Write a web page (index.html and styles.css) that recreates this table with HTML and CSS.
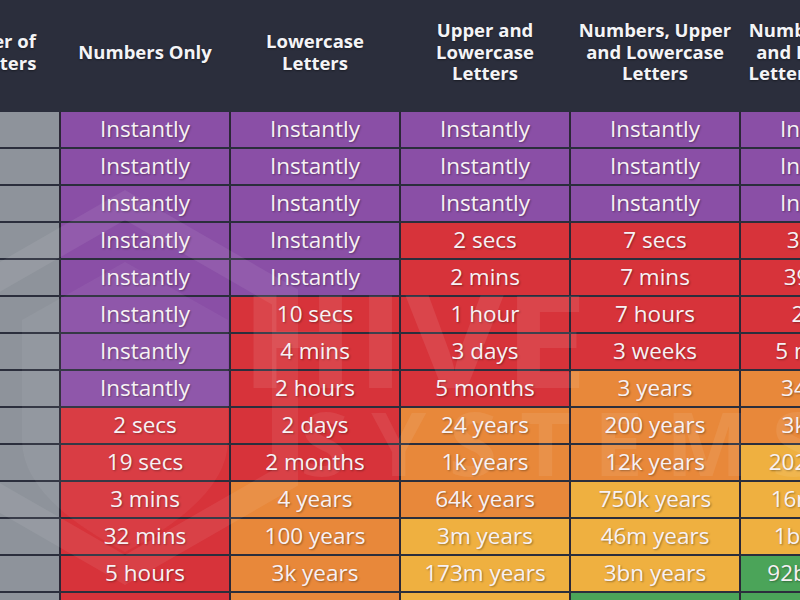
FILE: index.html
```html
<!DOCTYPE html>
<html lang="en">
<head>
<meta charset="utf-8">
<title>Password cracking times</title>
<link rel="stylesheet" href="styles.css">
</head>
<body>
<div class="page">
  <div class="table">
    <div class="row head">
      <div class="hc first">Number of<br>Characters</div>
      <div class="hc">Numbers Only</div>
      <div class="hc">Lowercase<br>Letters</div>
      <div class="hc">Upper and<br>Lowercase<br>Letters</div>
      <div class="hc">Numbers, Upper<br>and Lowercase<br>Letters</div>
      <div class="hc">Numbers, Upper<br>and Lowercase<br>Letters, Symbols</div>
    </div>
    <div class="row"><div class="c n">4</div><div class="c p">Instantly</div><div class="c p">Instantly</div><div class="c p">Instantly</div><div class="c p">Instantly</div><div class="c p">Instantly</div></div>
    <div class="row"><div class="c n">5</div><div class="c p">Instantly</div><div class="c p">Instantly</div><div class="c p">Instantly</div><div class="c p">Instantly</div><div class="c p">Instantly</div></div>
    <div class="row"><div class="c n">6</div><div class="c p">Instantly</div><div class="c p">Instantly</div><div class="c p">Instantly</div><div class="c p">Instantly</div><div class="c p">Instantly</div></div>
    <div class="row"><div class="c n">7</div><div class="c p">Instantly</div><div class="c p">Instantly</div><div class="c r">2 secs</div><div class="c r">7 secs</div><div class="c r">31 secs</div></div>
    <div class="row"><div class="c n">8</div><div class="c p">Instantly</div><div class="c p">Instantly</div><div class="c r">2 mins</div><div class="c r">7 mins</div><div class="c r">39 mins</div></div>
    <div class="row"><div class="c n">9</div><div class="c p">Instantly</div><div class="c r">10 secs</div><div class="c r">1 hour</div><div class="c r">7 hours</div><div class="c r">2 days</div></div>
    <div class="row"><div class="c n">10</div><div class="c p">Instantly</div><div class="c r">4 mins</div><div class="c r">3 days</div><div class="c r">3 weeks</div><div class="c r">5 months</div></div>
    <div class="row"><div class="c n">11</div><div class="c p">Instantly</div><div class="c r">2 hours</div><div class="c r">5 months</div><div class="c o">3 years</div><div class="c o">34 years</div></div>
    <div class="row"><div class="c n">12</div><div class="c r">2 secs</div><div class="c r">2 days</div><div class="c o">24 years</div><div class="c o">200 years</div><div class="c o">3k years</div></div>
    <div class="row"><div class="c n">13</div><div class="c r">19 secs</div><div class="c r">2 months</div><div class="c o">1k years</div><div class="c o">12k years</div><div class="c y">202k years</div></div>
    <div class="row"><div class="c n">14</div><div class="c r">3 mins</div><div class="c o">4 years</div><div class="c o">64k years</div><div class="c y">750k years</div><div class="c y">16m years</div></div>
    <div class="row"><div class="c n">15</div><div class="c r">32 mins</div><div class="c o">100 years</div><div class="c y">3m years</div><div class="c y">46m years</div><div class="c y">1bn years</div></div>
    <div class="row"><div class="c n">16</div><div class="c r">5 hours</div><div class="c o">3k years</div><div class="c y">173m years</div><div class="c y">3bn years</div><div class="c g">92bn years</div></div>
    <div class="row"><div class="c n">17</div><div class="c r">2 days</div><div class="c o">69k years</div><div class="c y">9bn years</div><div class="c g">179bn years</div><div class="c g">7tn years</div></div>
  </div>
  <svg class="watermark" viewBox="0 0 800 600" aria-hidden="true">
    <polygon class="hex" points="125,205 285,297 285,478 125,570 -35,478 -35,297"/>
    <path class="shield" d="M125 262 L228 320 L228 440 Q228 498 125 552 Q22 498 22 440 L22 320 Z"/>
    <text class="wm-big" x="240" y="388" textLength="348" lengthAdjust="spacingAndGlyphs">HIVE</text>
    <text class="wm-small" x="300" y="476" textLength="520" lengthAdjust="spacing">SYSTEMS</text>
  </svg>
</div>
</body>
</html>
```

FILE: styles.css
```css
html, body {
  margin: 0;
  padding: 0;
  background: #2b2e3c;
  overflow: hidden;
}

.page {
  position: relative;
  width: 800px;
  height: 600px;
  overflow: hidden;
  background: #2b2e3c;
  font-family: "Open Sans", "Noto Sans", "DejaVu Sans", sans-serif;
}

.table {
  margin-left: -78px;
  width: 988px;
  display: flex;
  flex-direction: column;
  gap: 2px;
}

.row {
  display: grid;
  grid-template-columns: 137px repeat(5, 168px);
  column-gap: 2px;
  height: 35px;
  background: #2b2736;
}

.row.head {
  height: 112px;
  background: #2b2e3c;
  margin-bottom: -2px;
}

.hc {
  display: flex;
  align-items: center;
  justify-content: center;
  text-align: center;
  color: #f4f4f6;
  font-weight: 700;
  font-size: 18.5px;
  line-height: 21.5px;
  padding-bottom: 9px;
  white-space: nowrap;
  text-shadow: 0 1px 2px rgba(0, 0, 0, 0.4);
}

.hc.first {
  padding-right: 9px;
}

.c {
  display: flex;
  align-items: center;
  justify-content: center;
  font-size: 22.5px;
  color: #f7f1f4;
  padding-bottom: 2px;
  text-shadow: 1px 1px 2px rgba(0, 0, 0, 0.35);
  white-space: nowrap;
  overflow: hidden;
}

.n {
  background: #8e939b;
  font-weight: 700;
  padding-right: 70px;
}
.p { background: #8a4fa6; }
.r { background: #d7333a; }
.o { background: #e8883a; }
.y { background: #efb040; }
.g { background: #4ba459; }

.watermark {
  position: absolute;
  left: 0;
  top: 0;
  width: 800px;
  height: 600px;
  pointer-events: none;
}

.hex {
  fill: none;
  stroke: rgba(255, 255, 255, 0.07);
  stroke-width: 26;
}

.shield {
  fill: rgba(255, 255, 255, 0.05);
}

.wm-big {
  font-family: "Open Sans", "DejaVu Sans", sans-serif;
  font-weight: 700;
  font-size: 130px;
  fill: rgba(255, 255, 255, 0.09);
}

.wm-small {
  font-family: "Open Sans", "DejaVu Sans", sans-serif;
  font-weight: 700;
  font-size: 88px;
  fill: rgba(255, 255, 255, 0.08);
}
```
